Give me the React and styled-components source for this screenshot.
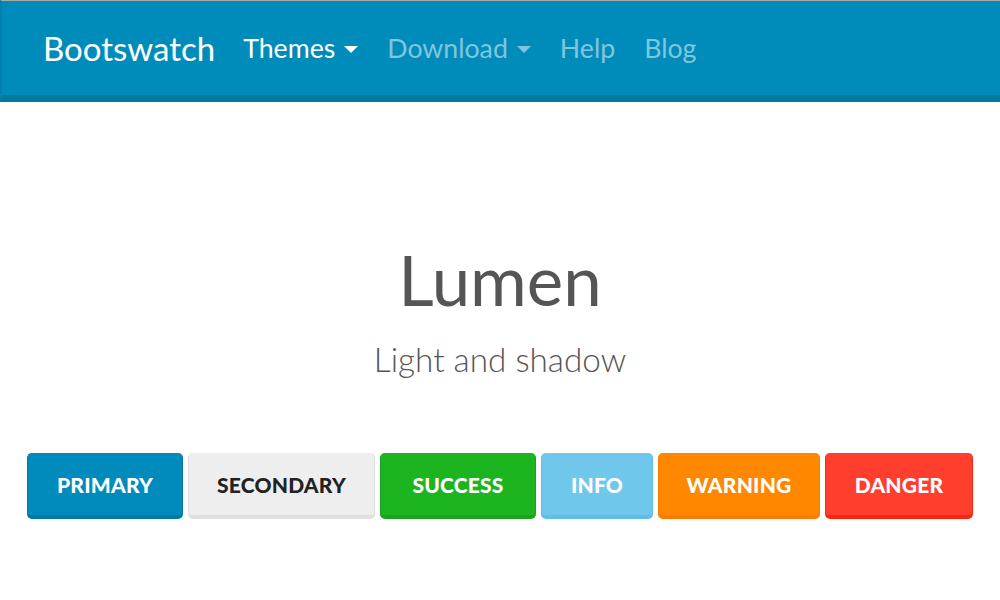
import React from "react"
import styled, { createGlobalStyle } from "styled-components"

const GlobalStyle = createGlobalStyle`
  body {
    margin: 0;
    background: #fff;
    font-family: "Lato", "Open Sans", sans-serif;
    color: #555;
  }
`

const Navbar = styled.nav`
  display: flex;
  align-items: center;
  height: 94px;
  padding-left: 43px;
  background: #008cba;
  border-top: 1px solid #a9a9a9;
  border-left: 2px solid #0081ad;
  border-bottom: 7px solid #0079a1;
`

const Brand = styled.a`
  font-size: 33px;
  color: #fff;
  text-decoration: none;
  margin-right: 28px;
  margin-left: -2px;
`

const NavLink = styled.a`
  display: flex;
  align-items: center;
  font-size: 26.7px;
  color: ${(p) => (p.active ? "#fff" : "#80c5dd")};
  text-decoration: none;
  margin-right: 29px;
`

const Caret = styled.span`
  width: 0;
  height: 0;
  margin-left: 9px;
  margin-top: 2px;
  border-left: 7px solid transparent;
  border-right: 7px solid transparent;
  border-top: 7px solid currentColor;
`

const Hero = styled.header`
  text-align: center;
  padding-top: 138px;
`

const Title = styled.h1`
  margin: 0;
  font-size: 69px;
  font-weight: 400;
  line-height: 80px;
  color: #555;
`

const Subtitle = styled.p`
  margin: 19px 0 0;
  font-size: 33.3px;
  font-weight: 300;
  line-height: 40px;
  color: #555;
`

const ButtonRow = styled.div`
  display: flex;
  justify-content: center;
  gap: 5px;
  margin-top: 74px;
`

const Button = styled.button`
  box-sizing: border-box;
  width: ${(p) => p.width}px;
  height: 66px;
  padding: 0;
  font-family: inherit;
  font-size: 21px;
  font-weight: 900;
  letter-spacing: 0.2px;
  text-transform: uppercase;
  color: ${(p) => p.fg || "#fff"};
  background: ${(p) => p.bg};
  border-style: solid;
  border-width: 0 1px 4px 1px;
  border-color: ${(p) => p.edge};
  border-radius: 5px;
  cursor: pointer;
`

const buttons = [
  { label: "Primary", width: 156, bg: "#008bbc", edge: "#0079a3" },
  { label: "Secondary", width: 187, bg: "#eeeeee", edge: "#dfdfdf", fg: "#222" },
  { label: "Success", width: 156, bg: "#1cb51f", edge: "#1ea121" },
  { label: "Info", width: 112, bg: "#6fc8ec", edge: "#5fbde8" },
  { label: "Warning", width: 162, bg: "#ff8800", edge: "#ff7b00" },
  { label: "Danger", width: 148, bg: "#ff3e2d", edge: "#ff2410" },
]

const App = () => {
  return (
    <>
      <GlobalStyle />
      <Navbar>
        <Brand href="#">Bootswatch</Brand>
        <NavLink href="#" active>
          Themes <Caret />
        </NavLink>
        <NavLink href="#">
          Download <Caret />
        </NavLink>
        <NavLink href="#">Help</NavLink>
        <NavLink href="#">Blog</NavLink>
      </Navbar>
      <Hero>
        <Title>Lumen</Title>
        <Subtitle>Light and shadow</Subtitle>
        <ButtonRow>
          {buttons.map((b) => (
            <Button key={b.label} width={b.width} bg={b.bg} edge={b.edge} fg={b.fg}>
              {b.label}
            </Button>
          ))}
        </ButtonRow>
      </Hero>
    </>
  )
}

export default App
